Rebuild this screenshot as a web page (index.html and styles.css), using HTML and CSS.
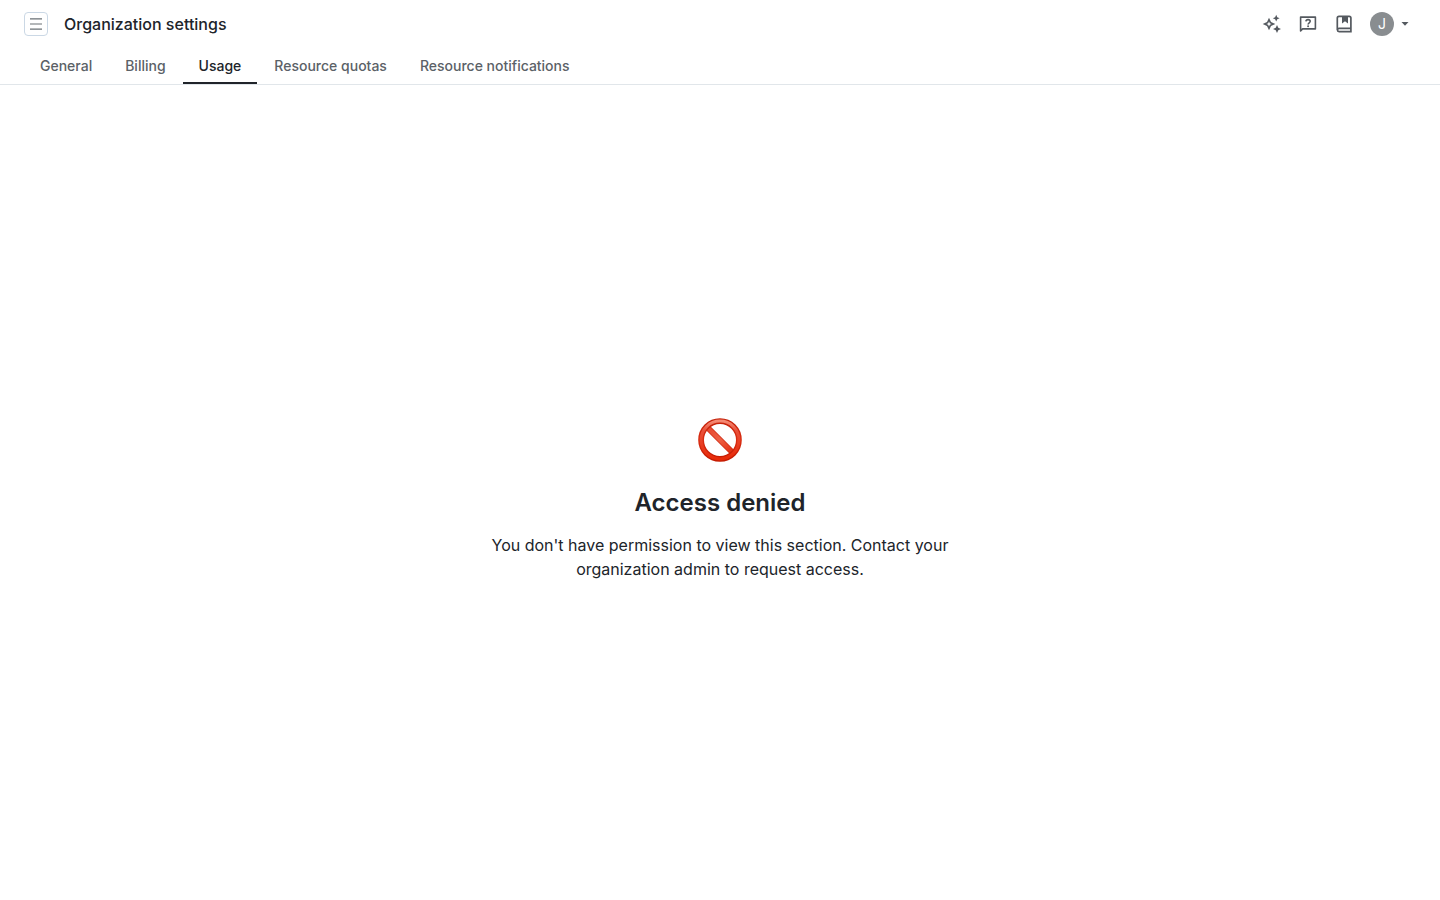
FILE: index.html
```html
<!DOCTYPE html>
<html lang="en">
<head>
<meta charset="utf-8">
<meta name="viewport" content="width=device-width, initial-scale=1">
<title>Organization settings</title>
<link rel="stylesheet" href="styles.css">
</head>
<body>
<header class="header">
  <div class="topbar">
    <button class="menu-button" type="button" aria-label="Open menu">
      <svg width="12" height="12" viewBox="0 0 12 12" fill="none" stroke="#6a7075" stroke-width="1.200"><path d="M0 .9h12M0 6h12M0 11.100h12"/></svg>
    </button>
    <h1 class="title">Organization settings</h1>
    <div class="actions">
      <button class="icon-button" type="button" aria-label="What's new">
        <svg width="24" height="24" viewBox="0 0 24 24" fill="#54595f"><path fill-rule="evenodd" d="M9 18.300 7 14 2.700 12 7 10 9 5.700l2 4.300 4.300 2L11 14ZM9 14.500l.8-1.700 1.700-.8-1.700-.8L9 9.500l-.8 1.700-1.700.8 1.700.8Z"/><path d="m16.200 2.800 1.050 2.350 2.350 1.050-2.350 1.050-1.050 2.350-1.050-2.350-2.350-1.050 2.350-1.050ZM17 13l1.250 2.750L21 17l-2.750 1.250L17 21l-1.250-2.750L13 17l2.750-1.250Z"/></svg>
      </button>
      <button class="icon-button" type="button" aria-label="Support">
        <svg width="24" height="24" viewBox="0 0 24 24" fill="none" stroke="#54595f" stroke-width="1.600"><path d="M4.600 18.900V5.100h14.800v11.800H6.600Z" stroke-linejoin="round"/><path d="M9.900 9.400c.1-1.100 1-1.800 2.150-1.800 1.200 0 2.150.7 2.150 1.700 0 1.500-2.100 1.500-2.100 3.200"/><circle cx="12.100" cy="14.300" r=".95" fill="#54595f" stroke="none"/></svg>
      </button>
      <button class="icon-button" type="button" aria-label="Documentation">
        <svg width="24" height="24" viewBox="0 0 24 24" fill="none" stroke="#54595f" stroke-width="1.700"><path d="M7 4.300h10.200c1 0 1.700.7 1.700 1.700v10.300H7.100a1.650 1.650 0 0 0 0 3.300h11.800v-3.300M5.300 18V6c0-1 .7-1.700 1.700-1.700"/><path fill="#54595f" stroke="none" d="M10 4h6v7.500l-3-2.200-3 2.200Z"/></svg>
      </button>
      <button class="account" type="button" aria-label="Account">
        <span class="avatar">J</span>
        <svg width="8" height="4" viewBox="0 0 8 4" fill="#54595f"><path d="M.5 0h7L4 3.700Z"/></svg>
      </button>
    </div>
  </div>
  <nav class="tabs" aria-label="Organization settings">
    <a class="tab" href="#general">General</a>
    <a class="tab" href="#billing">Billing</a>
    <a class="tab tab-active" href="#usage" aria-current="page">Usage</a>
    <a class="tab" href="#quotas">Resource quotas</a>
    <a class="tab" href="#notifications">Resource notifications</a>
  </nav>
</header>
<main class="main">
  <section class="empty">
    <svg width="48" height="48" viewBox="0 0 48 48" aria-hidden="true">
      <defs>
        <linearGradient id="ring" x1="0" y1="0" x2="0" y2="1"><stop offset="0" stop-color="#c5220a"/><stop offset=".5" stop-color="#d92d12"/><stop offset="1" stop-color="#c41b02"/></linearGradient>
        <linearGradient id="shine" x1="0" y1="0" x2="0" y2="1"><stop offset="0" stop-color="#f58a74"/><stop offset=".25" stop-color="#e9503a"/><stop offset="1" stop-color="#e82a08"/></linearGradient>
        <linearGradient id="bar" gradientUnits="userSpaceOnUse" x1="11" y1="11" x2="37" y2="37"><stop offset="0" stop-color="#e5472e"/><stop offset=".5" stop-color="#ee5f43"/><stop offset="1" stop-color="#e22a0c"/></linearGradient>
      </defs>
      <path d="m10 10 28 28" stroke="#cf2911" stroke-width="6"/>
      <path d="m10 10 28 28" stroke="url(#bar)" stroke-width="4.500"/>
      <circle cx="24" cy="24" r="18.900" fill="none" stroke="url(#ring)" stroke-width="5.800"/>
      <circle cx="24" cy="24" r="18.900" fill="none" stroke="url(#shine)" stroke-width="3"/>
    </svg>
    <h2 class="empty-title">Access denied</h2>
    <p class="empty-text">You don't have permission to view this section. Contact your organization admin to request access.</p>
  </section>
</main>
</body>
</html>
```
FILE: styles.css
```css
* { box-sizing: border-box; }
body {
  margin: 0;
  min-height: 100vh;
  display: flex;
  flex-direction: column;
  background: #fff;
  color: #20242a;
  font-family: Inter, "Liberation Sans", sans-serif;
}
button {
  padding: 0;
  border: 0;
  background: none;
  font: inherit;
  cursor: pointer;
}
svg { display: block; }
.header { border-bottom: 1px solid #e1e6ea; }
.topbar {
  display: flex;
  align-items: center;
  height: 48px;
  padding: 0 31px 0 24px;
}
.menu-button {
  display: grid;
  place-items: center;
  width: 24px;
  height: 24px;
  border: 1px solid #cbd8e5;
  border-radius: 4px;
}
.title {
  margin: 0 0 0 16px;
  font-size: 16px;
  line-height: 24px;
  font-weight: 500;
}
.actions {
  display: flex;
  align-items: center;
  gap: 12px;
  margin-left: auto;
}
.account {
  display: flex;
  align-items: center;
  gap: 7px;
  margin-left: 2px;
}
.avatar {
  width: 24px;
  height: 24px;
  border-radius: 50%;
  background: #898d90;
  color: #fff;
  font-size: 14px;
  line-height: 24px;
  text-align: center;
}
.tabs { display: flex; gap: 1px; padding: 0 24px; }
.tab {
  height: 36px;
  padding: 0 16px;
  border-bottom: 2px solid transparent;
  color: #5b6167;
  font-size: 14px;
  line-height: 36px;
  font-weight: 500;
  text-decoration: none;
}
.tab-active { border-color: #20242a; color: #20242a; }
.main {
  flex: 1;
  display: grid;
  place-items: center;
  padding: 12px 24px 0;
}
.empty {
  display: flex;
  flex-direction: column;
  align-items: center;
  max-width: 480px;
  text-align: center;
}
.empty-title {
  margin: 23px 0 14px;
  font-size: 24px;
  line-height: 32px;
  font-weight: 600;
}
.empty-text { margin: 0; font-size: 16px; line-height: 24px; }
```
